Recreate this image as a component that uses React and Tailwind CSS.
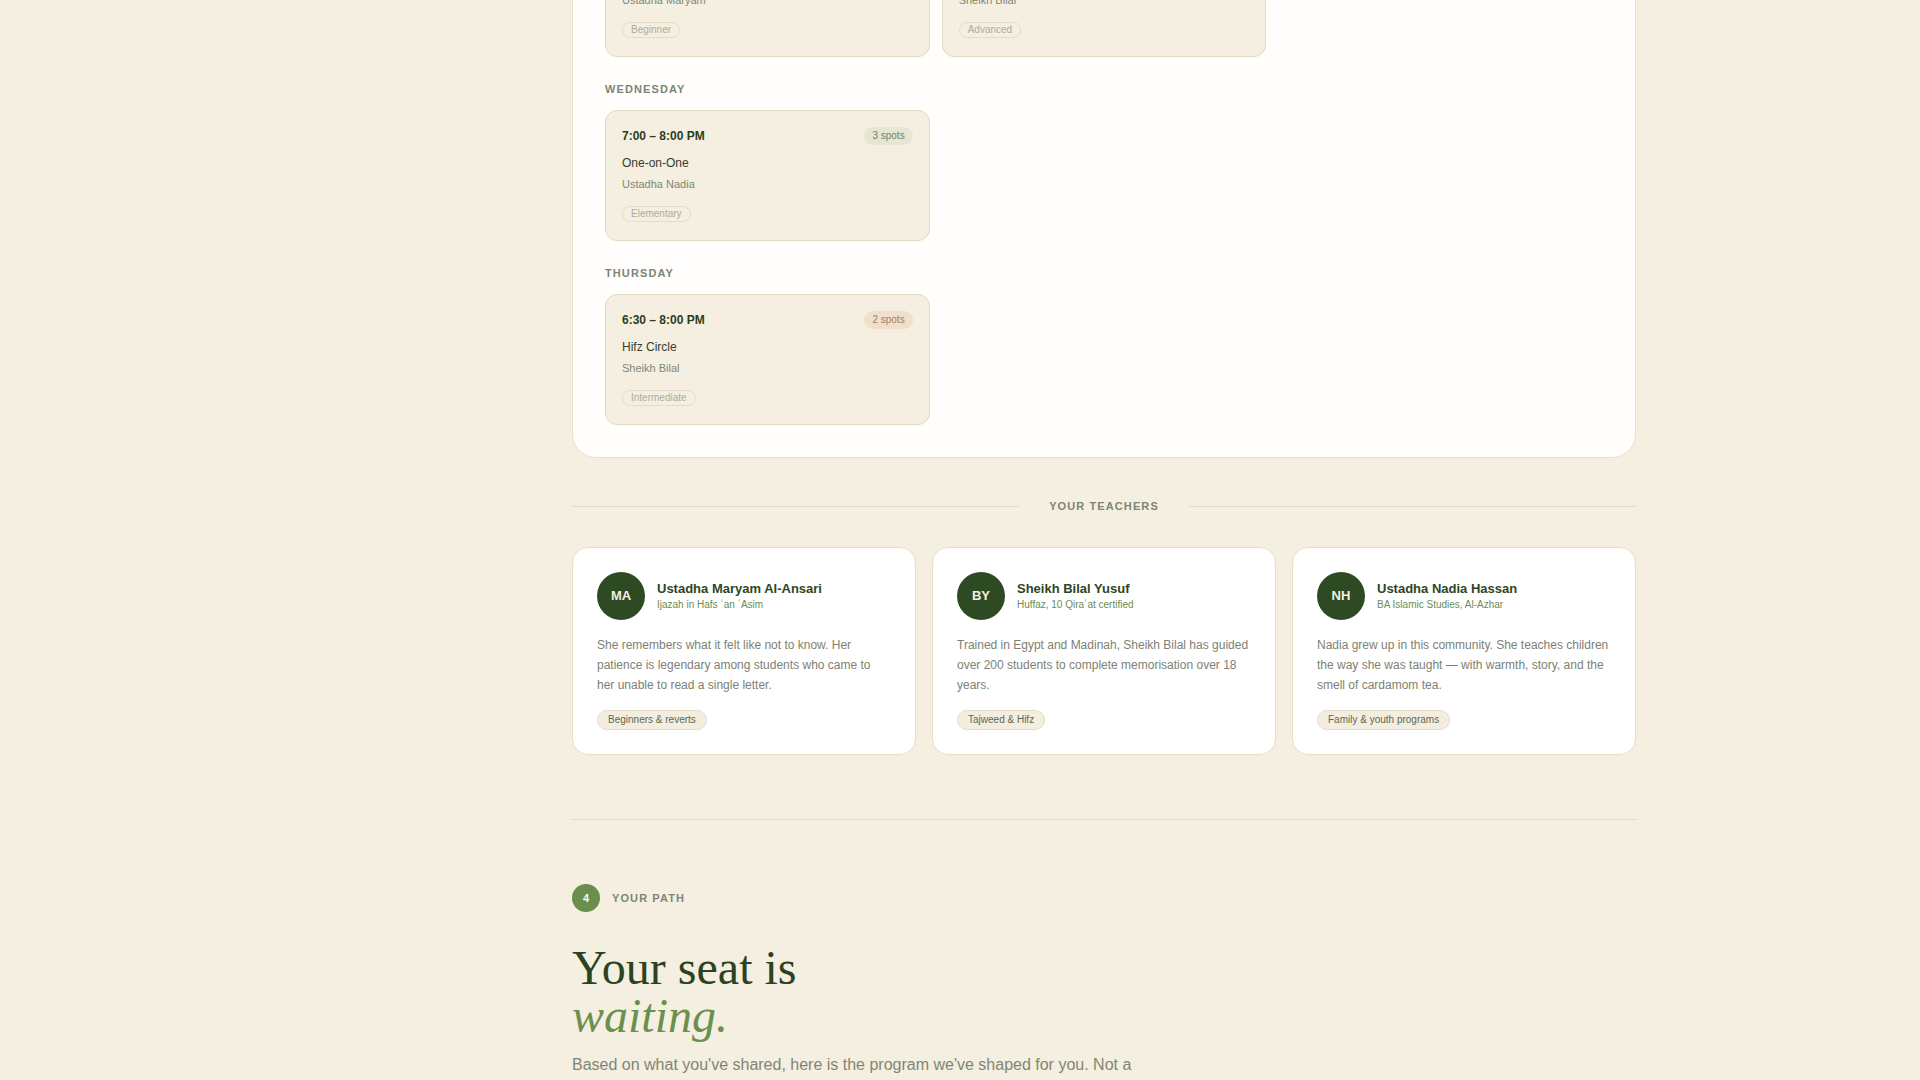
import React from 'react';

const schedule = [
  {
    day: 'Tuesday',
    slots: [
      { time: '5:00 – 6:00 PM', spots: '4 spots', tone: 'sage', title: 'Foundations', teacher: 'Ustadha Maryam', level: 'Beginner' },
      { time: '8:00 – 9:30 PM', spots: '1 spot', tone: 'peach', title: 'Hifz Review', teacher: 'Sheikh Bilal', level: 'Advanced' },
    ],
  },
  {
    day: 'Wednesday',
    slots: [
      { time: '7:00 – 8:00 PM', spots: '3 spots', tone: 'sage', title: 'One-on-One', teacher: 'Ustadha Nadia', level: 'Elementary' },
    ],
  },
  {
    day: 'Thursday',
    slots: [
      { time: '6:30 – 8:00 PM', spots: '2 spots', tone: 'peach', title: 'Hifz Circle', teacher: 'Sheikh Bilal', level: 'Intermediate' },
    ],
  },
];

const teachers = [
  {
    initials: 'MA',
    name: 'Ustadha Maryam Al-Ansari',
    creds: 'Ijazah in Hafs ʿan ʿAsim',
    bio: 'She remembers what it felt like not to know. Her patience is legendary among students who came to her unable to read a single letter.',
    tag: 'Beginners & reverts',
  },
  {
    initials: 'BY',
    name: 'Sheikh Bilal Yusuf',
    creds: 'Huffaz, 10 Qiraʿat certified',
    bio: 'Trained in Egypt and Madinah, Sheikh Bilal has guided over 200 students to complete memorisation over 18 years.',
    tag: 'Tajweed & Hifz',
  },
  {
    initials: 'NH',
    name: 'Ustadha Nadia Hassan',
    creds: 'BA Islamic Studies, Al-Azhar',
    bio: 'Nadia grew up in this community. She teaches children the way she was taught — with warmth, story, and the smell of cardamom tea.',
    tag: 'Family & youth programs',
  },
];

function SlotCard({ slot }) {
  return (
    <div className="rounded-xl border border-[#e2d9c3] bg-[#f4efe0] px-4 pt-4 pb-[18px]">
      <div className="flex items-center justify-between">
        <span className="text-[12px] font-bold text-[#2c3d22]">{slot.time}</span>
        {slot.tone === 'sage' ? (
          <span className="rounded-full bg-[#e5e7d3] px-2 py-1 text-[10px] leading-none text-[#718360]">{slot.spots}</span>
        ) : (
          <span className="rounded-full bg-[#f0dfca] px-2 py-1 text-[10px] leading-none text-[#a5805c]">{slot.spots}</span>
        )}
      </div>
      <p className="mt-2.5 text-[12px] leading-4 text-[#34402c]">{slot.title}</p>
      <p className="mt-[5px] text-[11px] leading-4 text-[#7f8775]">{slot.teacher}</p>
      <div className="mt-3.5 flex">
        <span className="rounded-full border border-[#e3dccb] px-2 py-0.5 text-[10px] leading-none text-[#acac9c]">{slot.level}</span>
      </div>
    </div>
  );
}

function TeacherCard({ t }) {
  return (
    <div className="rounded-2xl border border-[#e7dfcb] bg-white px-6 pt-6 pb-6">
      <div className="flex items-center gap-3">
        <div className="flex h-12 w-12 shrink-0 items-center justify-center rounded-full bg-[#2e4a23] text-[13px] font-bold text-[#f4efe0]">
          {t.initials}
        </div>
        <div>
          <p className="text-[13px] font-bold leading-[18px] text-[#2e4523]">{t.name}</p>
          <p className="text-[10px] leading-[14px] text-[#6d8c51]">{t.creds}</p>
        </div>
      </div>
      <p className="mt-4 text-[12px] leading-[1.65] text-[#7d8174]">{t.bio}</p>
      <div className="mt-[15px] flex">
        <span className="rounded-full border border-[#e3dbc6] bg-[#f3eee0] px-2.5 py-1 text-[10px] leading-[10px] text-[#5f6753]">{t.tag}</span>
      </div>
    </div>
  );
}

export default function App() {
  return (
    <div className="h-screen overflow-hidden bg-[#f4efe0] font-['Liberation_Sans',Arial,sans-serif]">
      <div className="flex">
        <aside className="w-72 shrink-0" />
        <main className="min-w-0 flex-1">
          <div className="mx-auto max-w-[1064px]">

            {/* Weekly schedule */}
            <section className="-mt-[136px] rounded-3xl border border-[#e8e0cb] bg-[#fffefc] p-8">
              <div className="space-y-6">
                {schedule.map((group) => (
                  <div key={group.day}>
                    <h4 className="mb-[13px] text-[11px] font-bold uppercase leading-4 tracking-widest text-[#7c8673]">{group.day}</h4>
                    <div className="grid grid-cols-3 gap-3">
                      {group.slots.map((slot) => (
                        <SlotCard key={slot.time} slot={slot} />
                      ))}
                    </div>
                  </div>
                ))}
              </div>
            </section>

            {/* Teachers */}
            <div className="mt-10 mb-[33px] flex items-center gap-7.5">
              <div className="h-px flex-1 bg-[#e2dac6]" />
              <span className="text-[11px] font-bold uppercase leading-4 tracking-widest text-[#7c8673]">Your Teachers</span>
              <div className="h-px flex-1 bg-[#e2dac6]" />
            </div>
            <div className="grid grid-cols-3 gap-4">
              {teachers.map((t) => (
                <TeacherCard key={t.initials} t={t} />
              ))}
            </div>

            {/* Step 4 */}
            <section className="mt-16 border-t border-[#e2dac6] pt-16">
              <div className="flex items-center gap-3">
                <span className="flex h-7 w-7 items-center justify-center rounded-full bg-[#6a8e4b] text-[11px] font-bold text-white">4</span>
                <span className="text-[11px] font-bold uppercase tracking-widest text-[#7c8673]">Your Path</span>
              </div>
              <h1 className="mt-8 font-['Liberation_Serif',serif] text-5xl font-normal leading-none text-[#2c4322]">
                Your seat is
                <em className="block italic text-[#6b8f4e]">waiting.</em>
              </h1>
              <p className="mt-3 max-w-xl text-base leading-relaxed text-[#808674]">
                Based on what you've shared, here is the program we've shaped for you. Not a template, but a path that fits the life you already live.
              </p>
            </section>

          </div>
        </main>
      </div>
    </div>
  );
}
